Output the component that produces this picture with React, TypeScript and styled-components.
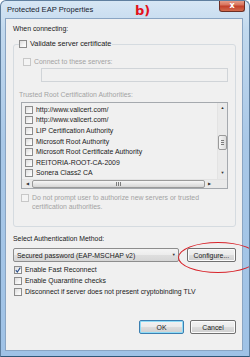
import React from 'react';
import styled, { createGlobalStyle } from 'styled-components';

const GlobalStyle = createGlobalStyle`
  html, body {
    margin: 0;
    padding: 0;
    background: #ffffff;
  }
  body {
    font-family: 'Liberation Sans', Arial, sans-serif;
    font-size: 6.9px;
    color: #1a1a1a;
  }
`;

const StyledWindow = styled.div`
  position: relative;
  width: 250px;
  height: 357px;
  box-sizing: border-box;
  padding: 0 6px 5px 4px;
  display: flex;
  flex-direction: column;
  overflow: hidden;
  border-radius: 6px 6px 0 0;
  border: 1px solid #5f7f9f;
  border-bottom-color: #2f5878;
  background: linear-gradient(180deg, #d6e6f4 0%, #c2d9ee 8%, #a9c8e7 40%, #9fc2e6 100%);
`;

const StyledTitleBar = styled.div`
  height: 17px;
  display: flex;
  align-items: center;
  padding-left: 2px;
  flex-shrink: 0;
`;

const StyledTitle = styled.span`
  font-size: 7.6px;
  color: #17222e;
  width: 128px;
`;

const StyledMark = styled.span`
  font-family: 'DejaVu Sans', 'Liberation Sans', sans-serif;
  font-weight: bold;
  font-size: 13px;
  color: #e3121c;
  margin-top: 1px;
`;

const StyledClose = styled.div`
  position: absolute;
  top: -1px;
  right: 4px;
  width: 26px;
  height: 12px;
  box-sizing: border-box;
  border: 1px solid #6d2f24;
  border-top: none;
  border-radius: 0 0 3px 3px;
  background: linear-gradient(180deg, #e9a793 0%, #d8735c 45%, #c2402a 55%, #d26a4c 100%);
  display: flex;
  align-items: center;
  justify-content: center;
  color: #ffffff;
  font-family: 'DejaVu Sans', sans-serif;
  font-weight: bold;
  font-size: 8px;
`;

const StyledClient = styled.div`
  flex: 1;
  position: relative;
  background: #f0f0f0;
  border: 1px solid #8aa5c3;
  padding: 5px 6px 0 7px;
  display: flex;
  flex-direction: column;
`;

const StyledLabel = styled.div<{ $disabled?: boolean }>`
  line-height: 10px;
  color: ${(props) => (props.$disabled ? '#a3a3a3' : '#1a1a1a')};
  white-space: nowrap;
`;

const StyledGroup = styled.div`
  margin-top: 10px;
  height: 183px;
  box-sizing: border-box;
  border: 1px solid #d5dbe0;
  border-radius: 3px;
  padding: 0 7px 0 5px;
  display: flex;
  flex-direction: column;
`;

const StyledGroupTitle = styled.div`
  margin-top: -6px;
  padding: 0 1px 0 0;
  align-self: flex-start;
  background: #f0f0f0;
  font-size: 7.3px;
`;

const StyledCheckRow = styled.div<{ $disabled?: boolean; $indent?: number }>`
  display: flex;
  align-items: flex-start;
  gap: 3px;
  margin-left: ${(props) => props.$indent || 0}px;
  color: ${(props) => (props.$disabled ? '#a3a3a3' : '#1a1a1a')};
  line-height: 10px;
  white-space: nowrap;
`;

const StyledBox = styled.span<{ $disabled?: boolean }>`
  flex-shrink: 0;
  width: 8px;
  height: 8px;
  margin-top: 1px;
  box-sizing: border-box;
  border: 1px solid ${(props) => (props.$disabled ? '#c8c8c8' : '#8c8c8c')};
  background: ${(props) =>
    props.$disabled
      ? '#f4f4f4'
      : 'linear-gradient(135deg, #dcdcdc 0%, #f4f4f4 60%, #ffffff 100%)'};
  display: flex;
  align-items: center;
  justify-content: center;
`;

const StyledInput = styled.div`
  margin: 1px 0 0 22px;
  height: 14px;
  box-sizing: border-box;
  border: 1px solid #d0d4d8;
  background: #f0f0f0;
`;

const StyledList = styled.div`
  margin: 2px 0 0 2px;
  height: 87px;
  box-sizing: border-box;
  border: 1px solid #a5a9ae;
  background: #f0f0f0;
  display: grid;
  grid-template-columns: 1fr 10px;
  grid-template-rows: 1fr 9px;
`;

const StyledItems = styled.div`
  padding: 1px 0 0 3px;
  overflow: hidden;
`;

const StyledItem = styled.div`
  height: 10.6px;
  display: flex;
  align-items: center;
  gap: 3px;
  white-space: nowrap;
`;

const StyledVScroll = styled.div`
  background: #eaeaea;
  border-left: 1px solid #e3e3e3;
  display: flex;
  flex-direction: column;
  align-items: center;
  justify-content: space-between;
  padding: 3px 0 4px;
  position: relative;
`;

const StyledVThumb = styled.div`
  position: absolute;
  top: 32px;
  left: 0;
  width: 9px;
  height: 15px;
  box-sizing: border-box;
  border: 1px solid #9a9a9a;
  border-radius: 2px;
  background: linear-gradient(90deg, #f6f6f6, #dcdcdc);
  display: flex;
  flex-direction: column;
  align-items: center;
  justify-content: center;
  gap: 1px;
`;

const StyledGrip = styled.span<{ $vertical?: boolean }>`
  display: block;
  width: ${(props) => (props.$vertical ? '1px' : '3px')};
  height: ${(props) => (props.$vertical ? '4px' : '1px')};
  background: #7c7c7c;
`;

const StyledHScroll = styled.div`
  grid-column: 1 / 3;
  background: #eaeaea;
  border-top: 1px solid #e3e3e3;
  display: flex;
  align-items: center;
  padding: 0 16px 0 4px;
  gap: 3px;
`;

const StyledHThumb = styled.div`
  flex: 1;
  height: 8px;
  box-sizing: border-box;
  border: 1px solid #9a9a9a;
  border-radius: 2px;
  background: linear-gradient(180deg, #f6f6f6, #d6d6d6);
  display: flex;
  align-items: center;
  justify-content: center;
  gap: 1px;
`;

const StyledArrow = styled.span`
  font-size: 4px;
  line-height: 4px;
  color: #333;
`;

const StyledPrompt = styled(StyledCheckRow)`
  margin-top: 4px;
  white-space: normal;
  line-height: 9px;
`;

const StyledSection = styled.div`
  margin-top: 7px;
`;

const StyledMethodRow = styled.div`
  margin-top: 4px;
  display: flex;
  gap: 8px;
  align-items: center;
`;

const StyledSelect = styled.div`
  width: 168px;
  height: 14px;
  box-sizing: border-box;
  border: 1px solid #8d8d8d;
  border-radius: 2px;
  background: linear-gradient(180deg, #f4f4f4 0%, #ececec 50%, #dedede 51%, #d6d6d6 100%);
  display: flex;
  align-items: center;
  justify-content: space-between;
  padding: 0 2px 0 3px;
  white-space: nowrap;
`;

const StyledButton = styled.div<{ $width: number; $focused?: boolean }>`
  width: ${(props) => props.$width}px;
  height: 14px;
  box-sizing: border-box;
  border: 1px solid ${(props) => (props.$focused ? '#3c7fb1' : '#707070')};
  border-radius: 2px;
  box-shadow: ${(props) => (props.$focused ? 'inset 0 0 0 1px #8fdcf7' : 'inset 0 0 0 1px #fbfbfb')};
  background: linear-gradient(180deg, #f2f2f2 0%, #ebebeb 50%, #dddddd 51%, #cfcfcf 100%);
  display: flex;
  align-items: center;
  justify-content: center;
  white-space: nowrap;
`;

const StyledOptions = styled.div`
  margin-top: 3px;
  display: flex;
  flex-direction: column;
  gap: 1px;
`;

const StyledFooter = styled.div`
  margin-top: auto;
  margin-bottom: 16px;
  display: flex;
  justify-content: flex-end;
  gap: 6px;
`;

const StyledEllipse = styled.div`
  position: absolute;
  left: 177px;
  top: 241px;
  width: 80px;
  height: 31px;
  box-sizing: border-box;
  border: 1.5px solid #d8232a;
  border-radius: 50%;
  pointer-events: none;
`;

const Check = () => (
  <svg width="6" height="6" viewBox="0 0 6 6">
    <path d="M0.8 3.2 L2.3 5 L5.3 0.6" fill="none" stroke="#2a4f8a" strokeWidth="1.1" />
  </svg>
);

const Box = ({ checked, disabled }: { checked?: boolean; disabled?: boolean }) => (
  <StyledBox $disabled={disabled}>{checked && <Check />}</StyledBox>
);

const authorities = [
  'http://www.valicert.com/',
  'http://www.valicert.com/',
  'LIP Certification Authority',
  'Microsoft Root Authority',
  'Microsoft Root Certificate Authority',
  'REITORIA-ROOT-CA-2009',
  'Sonera Class2 CA',
];

const options = [
  { label: 'Enable Fast Reconnect', checked: true },
  { label: 'Enable Quarantine checks', checked: false },
  { label: 'Disconnect if server does not present cryptobinding TLV', checked: false },
];

const App = () => {
  return (
    <>
      <GlobalStyle />
      <StyledWindow>
        <StyledTitleBar>
          <StyledTitle>Protected EAP Properties</StyledTitle>
          <StyledMark>b)</StyledMark>
        </StyledTitleBar>
        <StyledClose>x</StyledClose>
        <StyledClient>
          <StyledLabel>When connecting:</StyledLabel>
          <StyledGroup>
            <StyledGroupTitle>
              <StyledCheckRow>
                <Box />
                Validate server certificate
              </StyledCheckRow>
            </StyledGroupTitle>
            <StyledCheckRow $disabled $indent={4} style={{ marginTop: 8 }}>
              <Box disabled />
              Connect to these servers:
            </StyledCheckRow>
            <StyledInput />
            <StyledLabel $disabled style={{ marginTop: 8 }}>
              Trusted Root Certification Authorities:
            </StyledLabel>
            <StyledList>
              <StyledItems>
                {authorities.map((name, i) => (
                  <StyledItem key={i}>
                    <Box />
                    {name}
                  </StyledItem>
                ))}
              </StyledItems>
              <StyledVScroll>
                <StyledArrow>▲</StyledArrow>
                <StyledVThumb>
                  <StyledGrip />
                  <StyledGrip />
                  <StyledGrip />
                </StyledVThumb>
                <StyledArrow>▼</StyledArrow>
              </StyledVScroll>
              <StyledHScroll>
                <StyledArrow>◀</StyledArrow>
                <StyledHThumb>
                  <StyledGrip $vertical />
                  <StyledGrip $vertical />
                  <StyledGrip $vertical />
                </StyledHThumb>
                <StyledArrow>▶</StyledArrow>
              </StyledHScroll>
            </StyledList>
            <StyledPrompt $disabled $indent={2}>
              <Box disabled />
              <span>
                Do not prompt user to authorize new servers or trusted
                <br />
                certification authorities.
              </span>
            </StyledPrompt>
          </StyledGroup>
          <StyledSection>
            <StyledLabel>Select Authentication Method:</StyledLabel>
            <StyledMethodRow>
              <StyledSelect>
                Secured password (EAP-MSCHAP v2)
                <StyledArrow>▼</StyledArrow>
              </StyledSelect>
              <StyledButton $width={50}>Configure...</StyledButton>
            </StyledMethodRow>
          </StyledSection>
          <StyledOptions>
            {options.map((o) => (
              <StyledCheckRow key={o.label} $indent={1}>
                <Box checked={o.checked} />
                {o.label}
              </StyledCheckRow>
            ))}
          </StyledOptions>
          <StyledFooter>
            <StyledButton $width={45} $focused>
              OK
            </StyledButton>
            <StyledButton $width={46}>Cancel</StyledButton>
          </StyledFooter>
        </StyledClient>
        <StyledEllipse />
      </StyledWindow>
    </>
  );
};

export default App;
